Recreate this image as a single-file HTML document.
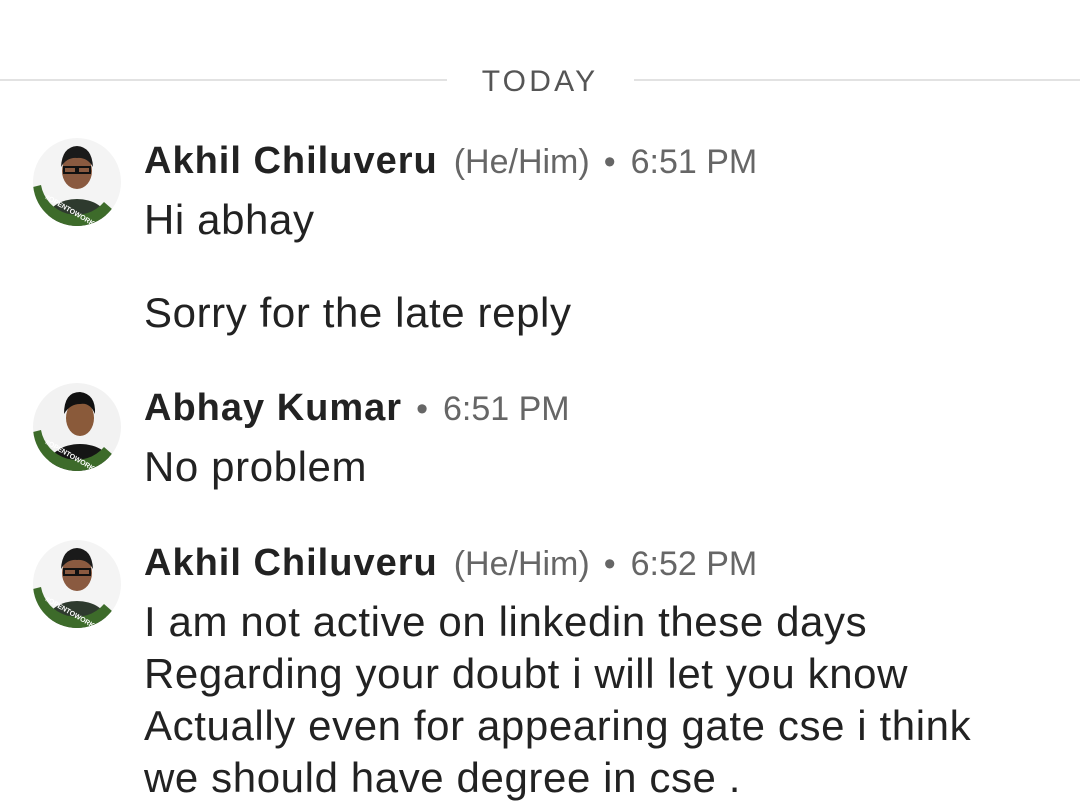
<!DOCTYPE html>
<html><head><style>
html,body{margin:0;padding:0;background:#fff;width:1080px;height:810px;overflow:hidden;font-family:"Liberation Sans",Roboto,sans-serif;}
.a{position:absolute;white-space:nowrap;}
.line{position:absolute;top:79px;height:2px;background:#e2e2e2;}
.today{left:0;width:1080px;text-align:center;top:65px;font-size:30px;letter-spacing:3.2px;color:#555;}
.name{font-size:38px;font-weight:bold;color:#222;letter-spacing:1px;}
.meta{font-size:34px;color:#666;font-weight:normal;}
.msg{font-size:42px;color:#222;line-height:52px;letter-spacing:0.6px;}
.av{position:absolute;width:90px;height:90px;border-radius:50%;overflow:hidden;}
.d{display:inline-block;margin:0 15px 0 14px;}
</style></head><body>
<div class="line" style="left:0;width:447px"></div>
<div class="line" style="left:634px;width:446px"></div>
<div class="a today">TODAY</div>

<svg width="0" height="0" style="position:absolute">
<defs>
<clipPath id="c"><circle cx="45" cy="45" r="44"/></clipPath>
</defs></svg>

<svg class="av" style="left:32px;top:137px" viewBox="0 0 90 90">
<g clip-path="url(#c)"><rect width="90" height="90" fill="#f4f4f4"/>
<ellipse cx="45" cy="82" rx="30" ry="20" fill="#2e3a2e"/>
<ellipse cx="45" cy="34" rx="15" ry="18" fill="#8a5a40"/>
<path d="M29 30 Q30 10 45 9 Q60 10 61 30 Q55 20 45 21 Q35 20 29 30Z" fill="#1a1a1a"/>
<rect x="32" y="30" width="12" height="6" fill="none" stroke="#111" stroke-width="2"/>
<rect x="46" y="30" width="12" height="6" fill="none" stroke="#111" stroke-width="2"/>
<path d="M1 50 A44 44 0 0 0 80 72 L72 65 A36 36 0 0 1 9 48Z" fill="#3d6b2a"/>
<text x="12" y="76" font-size="7" fill="#fff" font-weight="bold" transform="rotate(30 40 70)">#OPENTOWORK</text>
</g></svg>

<svg class="av" style="left:32px;top:382px" viewBox="0 0 90 90">
<g clip-path="url(#c)"><rect width="90" height="90" fill="#f2f2f2"/>
<ellipse cx="48" cy="84" rx="32" ry="22" fill="#151515"/>
<ellipse cx="48" cy="36" rx="14" ry="18" fill="#8a5a3a"/>
<path d="M32 32 Q32 10 48 10 Q64 12 63 32 Q58 20 48 22 Q38 22 32 32Z" fill="#111"/>
<path d="M1 50 A44 44 0 0 0 80 72 L72 65 A36 36 0 0 1 9 48Z" fill="#3d6b2a"/>
<text x="12" y="76" font-size="7" fill="#fff" font-weight="bold" transform="rotate(30 40 70)">#OPENTOWORK</text>
</g></svg>

<svg class="av" style="left:32px;top:539px" viewBox="0 0 90 90">
<g clip-path="url(#c)"><rect width="90" height="90" fill="#f4f4f4"/>
<ellipse cx="45" cy="82" rx="30" ry="20" fill="#2e3a2e"/>
<ellipse cx="45" cy="34" rx="15" ry="18" fill="#8a5a40"/>
<path d="M29 30 Q30 10 45 9 Q60 10 61 30 Q55 20 45 21 Q35 20 29 30Z" fill="#1a1a1a"/>
<rect x="32" y="30" width="12" height="6" fill="none" stroke="#111" stroke-width="2"/>
<rect x="46" y="30" width="12" height="6" fill="none" stroke="#111" stroke-width="2"/>
<path d="M1 50 A44 44 0 0 0 80 72 L72 65 A36 36 0 0 1 9 48Z" fill="#3d6b2a"/>
<text x="12" y="76" font-size="7" fill="#fff" font-weight="bold" transform="rotate(30 40 70)">#OPENTOWORK</text>
</g></svg>

<div class="a" style="left:144px;top:140px"><span class="name">Akhil Chiluveru</span><span class="meta" style="margin-left:16px">(He/Him)<span class="d">•</span>6:51 PM</span></div>
<div class="a msg" style="left:144px;top:194px">Hi abhay</div>
<div class="a msg" style="left:144px;top:287px">Sorry for the late reply</div>

<div class="a" style="left:144px;top:387px"><span class="name">Abhay Kumar</span><span class="meta"><span class="d">•</span>6:51 PM</span></div>
<div class="a msg" style="left:144px;top:441px">No problem</div>

<div class="a" style="left:144px;top:542px"><span class="name">Akhil Chiluveru</span><span class="meta" style="margin-left:16px">(He/Him)<span class="d">•</span>6:52 PM</span></div>
<div class="a msg" style="left:144px;top:596px">I am not active on linkedin these days<br>Regarding your doubt i will let you know<br>Actually even for appearing gate cse i think<br>we should have degree in cse .</div>
</body></html>
